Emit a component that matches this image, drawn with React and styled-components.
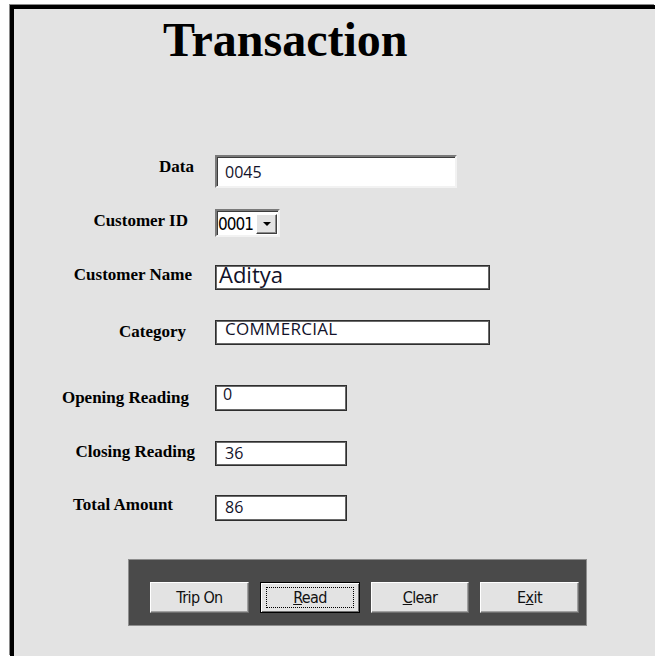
import styled, { createGlobalStyle } from "styled-components";

const GlobalStyle = createGlobalStyle`
  html, body {
    margin: 0;
    padding: 0;
    background: #ffffff;
    overflow: hidden;
  }
`;

const Frame = styled.div`
  box-sizing: border-box;
  margin: 5px 0 0 10px;
  height: calc(100vh - 5px);
  background: #e3e3e3;
  border-top: 4px solid #000;
  border-left: 4px solid #000;
  box-shadow: -1px -1px 0 #8a8a8a;
  padding-top: 7px;
`;

const Title = styled.h1`
  margin: 0;
  padding-left: 149px;
  font-family: "Liberation Serif", "Times New Roman", serif;
  font-weight: bold;
  font-size: 48px;
  line-height: 48px;
  color: #000;
`;

const Row = styled.div`
  display: grid;
  grid-template-columns: 201px auto;
  align-items: start;
  margin-top: ${(p) => p.$top}px;
`;

const Label = styled.label`
  justify-self: end;
  padding-right: ${(p) => p.$inset}px;
  padding-top: ${(p) => p.$drop ?? 2}px;
  font-family: "Liberation Serif", "Times New Roman", serif;
  font-weight: bold;
  font-size: 17px;
  line-height: 17px;
  color: #000;
  white-space: nowrap;
`;

const Field = styled.div`
  box-sizing: border-box;
  width: ${(p) => p.$w}px;
  height: ${(p) => p.$h}px;
  padding: ${(p) => p.$pad ?? "0 0 0 8px"};
  background: #fff;
  border: 1px solid #2e2e2e;
  box-shadow: inset 0 0 0 1px #6a6a6a;
  font-family: "Open Sans", "Noto Sans", sans-serif;
  font-size: ${(p) => p.$size ?? 16}px;
  line-height: ${(p) => p.$lh}px;
  letter-spacing: ${(p) => p.$track ?? 0}px;
  color: #12122a;
  white-space: nowrap;
`;

const SunkenField = styled(Field)`
  border: 2px solid;
  border-color: #7a7a7a #f2f2f2 #f2f2f2 #7a7a7a;
  box-shadow: inset 1px 1px 0 #3c3c3c;
`;

const Combo = styled.div`
  box-sizing: border-box;
  width: 65px;
  height: 28px;
  display: flex;
  align-items: center;
  justify-content: space-between;
  padding: 2px 1px 1px 1px;
  background: #fff;
  border: 2px solid;
  border-color: #7a7a7a #f2f2f2 #f2f2f2 #7a7a7a;
  box-shadow: inset 1px 1px 0 #3c3c3c;
  font-family: "DejaVu Sans", sans-serif;
  font-stretch: condensed;
  font-size: 17px;
  color: #000;
`;

const ComboText = styled.span`
  line-height: 20px;
  letter-spacing: -1px;
`;

const ComboButton = styled.div`
  box-sizing: border-box;
  width: 21px;
  height: 20px;
  display: flex;
  align-items: center;
  justify-content: center;
  background: #e3e3e3;
  border: 1px solid;
  border-color: #fff #404040 #404040 #fff;
  box-shadow: inset -1px -1px 0 #8a8a8a;
`;

const Arrow = styled.div`
  width: 0;
  height: 0;
  border-left: 4px solid transparent;
  border-right: 4px solid transparent;
  border-top: 4px solid #000;
  margin-top: 1px;
`;

const Panel = styled.div`
  box-sizing: border-box;
  width: 459px;
  height: 67px;
  margin: 38px 0 0 114px;
  padding: 22px 0 0 21px;
  display: flex;
  gap: 11px;
  background: #4a4a4a;
  border: 1px solid #8e8e8e;
`;

const Button = styled.button`
  position: relative;
  box-sizing: border-box;
  width: ${(p) => p.$w}px;
  height: 31px;
  padding: 0;
  background: #e3e3e3;
  border: 1px solid;
  border-color: ${(p) => (p.$focused ? "#000" : "#fff #6e6e6e #6e6e6e #fff")};
  box-shadow: ${(p) =>
    p.$focused
      ? "inset 1px 1px 0 #fff, inset -1px -1px 0 #6e6e6e"
      : "inset -1px -1px 0 #a0a0a0"};
  font-family: "DejaVu Sans", sans-serif;
  font-stretch: condensed;
  font-size: 16px;
  letter-spacing: -0.6px;
  color: #111;
  cursor: default;

  &::after {
    content: "";
    display: ${(p) => (p.$focused ? "block" : "none")};
    position: absolute;
    inset: 4px 5px;
    border: 1px dotted #000;
  }
`;

const rows = [
  { label: "Data", inset: 21, top: 91, drop: 3 },
  { label: "Customer ID", inset: 27, top: 21, drop: 3 },
  { label: "Customer Name", inset: 23, top: 28, drop: 1 },
  { label: "Category", inset: 29, top: 30, drop: 3 },
  { label: "Opening Reading", inset: 26, top: 40, drop: 4 },
  { label: "Closing Reading", inset: 20, top: 30, drop: 2 },
  { label: "Total Amount", inset: 42, top: 29, drop: 1 },
];

export default function App() {
  const [data, id, name, category, opening, closing, total] = rows;
  return (
    <>
      <GlobalStyle />
      <Frame>
        <Title>Transaction</Title>

        <Row $top={data.top}>
          <Label $inset={data.inset} $drop={data.drop}>{data.label}</Label>
          <SunkenField $w={242} $h={33} $lh={29} $pad="1px 0 0 8px">0045</SunkenField>
        </Row>

        <Row $top={id.top}>
          <Label $inset={id.inset} $drop={id.drop}>{id.label}</Label>
          <Combo>
            <ComboText>0001</ComboText>
            <ComboButton>
              <Arrow />
            </ComboButton>
          </Combo>
        </Row>

        <Row $top={name.top}>
          <Label $inset={name.inset} $drop={name.drop}>{name.label}</Label>
          <Field $w={275} $h={25} $size={22} $lh={17} $pad="0 0 0 3px">Aditya</Field>
        </Row>

        <Row $top={category.top}>
          <Label $inset={category.inset} $drop={category.drop}>{category.label}</Label>
          <Field $w={275} $h={25} $size={17} $lh={16} $track={0.3} $pad="0 0 0 9px">
            COMMERCIAL
          </Field>
        </Row>

        <Row $top={opening.top}>
          <Label $inset={opening.inset} $drop={opening.drop}>{opening.label}</Label>
          <Field $w={132} $h={26} $lh={17} $pad="0 0 0 7px">0</Field>
        </Row>

        <Row $top={closing.top}>
          <Label $inset={closing.inset} $drop={closing.drop}>{closing.label}</Label>
          <Field $w={132} $h={25} $lh={22} $pad="0 0 0 9px">36</Field>
        </Row>

        <Row $top={total.top}>
          <Label $inset={total.inset} $drop={total.drop}>{total.label}</Label>
          <Field $w={132} $h={26} $lh={22} $pad="0 0 0 9px">86</Field>
        </Row>

        <Panel>
          <Button $w={99}>Trip On</Button>
          <Button $w={100} $focused>
            <u>R</u>ead
          </Button>
          <Button $w={98}>
            <u>C</u>lear
          </Button>
          <Button $w={99}>
            E<u>x</u>it
          </Button>
        </Panel>
      </Frame>
    </>
  );
}
